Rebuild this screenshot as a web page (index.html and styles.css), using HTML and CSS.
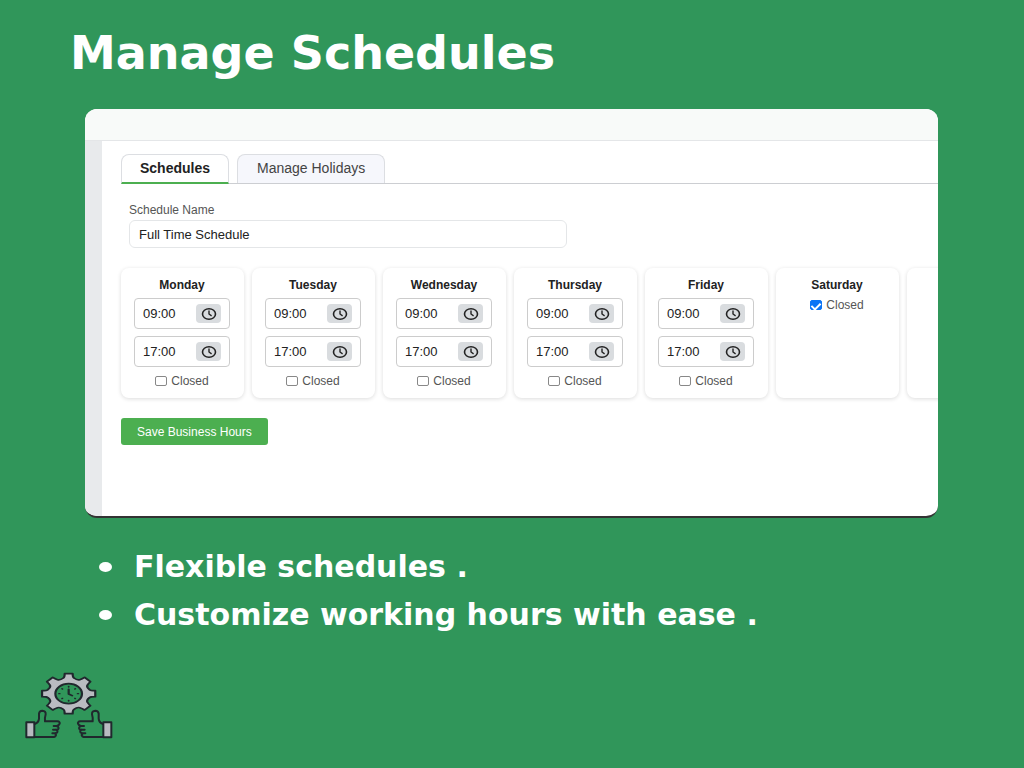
FILE: index.html
```html
<!DOCTYPE html>
<html lang="en">
<head>
    <meta charset="UTF-8">
    <meta name="viewport" content="width=device-width, initial-scale=1.0">
    <title>Manage Schedules</title>
    <link rel="stylesheet" href="styles.css">
</head>
<body>
    <!-- Shared clock icon -->
    <svg class="sprite" aria-hidden="true">
        <symbol id="clock" viewBox="0 0 16 14">
            <ellipse cx="8" cy="7" rx="6.5" ry="5.3" fill="none" stroke="#222" stroke-width="1.6"/>
            <path d="M8 3.5V7l2.6 1.8" fill="none" stroke="#222" stroke-width="1.4"/>
        </symbol>
    </svg>

    <h1 class="page-title">Manage Schedules</h1>

    <main class="window">
        <div class="window-bar"></div>
        <div class="window-body">
            <div class="side-strip"></div>
            <form class="content">
                <div class="tabs">
                    <button type="button" class="tab active">Schedules</button>
                    <button type="button" class="tab">Manage Holidays</button>
                </div>

                <div class="name-field">
                    <label for="schedule-name">Schedule Name</label>
                    <input type="text" id="schedule-name" value="Full Time Schedule">
                </div>

                <div class="days">
                    <section class="day">
                        <h2>Monday</h2>
                        <div class="time"><input type="text" value="09:00" aria-label="Monday opens"><button type="button" aria-label="Pick time"><svg><use href="#clock"/></svg></button></div>
                        <div class="time"><input type="text" value="17:00" aria-label="Monday closes"><button type="button" aria-label="Pick time"><svg><use href="#clock"/></svg></button></div>
                        <label class="closed"><input type="checkbox">Closed</label>
                    </section>
                    <section class="day">
                        <h2>Tuesday</h2>
                        <div class="time"><input type="text" value="09:00" aria-label="Tuesday opens"><button type="button" aria-label="Pick time"><svg><use href="#clock"/></svg></button></div>
                        <div class="time"><input type="text" value="17:00" aria-label="Tuesday closes"><button type="button" aria-label="Pick time"><svg><use href="#clock"/></svg></button></div>
                        <label class="closed"><input type="checkbox">Closed</label>
                    </section>
                    <section class="day">
                        <h2>Wednesday</h2>
                        <div class="time"><input type="text" value="09:00" aria-label="Wednesday opens"><button type="button" aria-label="Pick time"><svg><use href="#clock"/></svg></button></div>
                        <div class="time"><input type="text" value="17:00" aria-label="Wednesday closes"><button type="button" aria-label="Pick time"><svg><use href="#clock"/></svg></button></div>
                        <label class="closed"><input type="checkbox">Closed</label>
                    </section>
                    <section class="day">
                        <h2>Thursday</h2>
                        <div class="time"><input type="text" value="09:00" aria-label="Thursday opens"><button type="button" aria-label="Pick time"><svg><use href="#clock"/></svg></button></div>
                        <div class="time"><input type="text" value="17:00" aria-label="Thursday closes"><button type="button" aria-label="Pick time"><svg><use href="#clock"/></svg></button></div>
                        <label class="closed"><input type="checkbox">Closed</label>
                    </section>
                    <section class="day">
                        <h2>Friday</h2>
                        <div class="time"><input type="text" value="09:00" aria-label="Friday opens"><button type="button" aria-label="Pick time"><svg><use href="#clock"/></svg></button></div>
                        <div class="time"><input type="text" value="17:00" aria-label="Friday closes"><button type="button" aria-label="Pick time"><svg><use href="#clock"/></svg></button></div>
                        <label class="closed"><input type="checkbox">Closed</label>
                    </section>
                    <section class="day">
                        <h2>Saturday</h2>
                        <label class="closed"><input type="checkbox" checked>Closed</label>
                    </section>
                    <section class="day"></section>
                </div>

                <button type="submit" class="save">Save Business Hours</button>
            </form>
        </div>
    </main>

    <ul class="features">
        <li>Flexible schedules .</li>
        <li>Customize working hours with ease .</li>
    </ul>

    <!-- Gear with clock, held up by two thumbs -->
    <svg class="logo" viewBox="45 36 264 201" fill="none" stroke="#20282d" stroke-width="6" stroke-linejoin="round" stroke-linecap="round" aria-hidden="true">
        <g transform="translate(176 101) scale(1.33 1)">
            <path fill="#b9bbc1" stroke-width="5" d="M-12-47Q-9-49-9-60H9Q9-49 12-47Q19-40 25-42Q30-44 36-49L49-36Q44-30 42-25Q40-19 47-12Q49-9 60-9V9Q49 9 47 12Q40 19 42 25Q44 30 49 36L36 49Q30 44 25 42Q19 40 12 47Q9 49 9 60H-9Q-9 49-12 47Q-19 40-25 42Q-30 44-36 49L-49 36Q-44 30-42 25Q-40 19-47 12Q-49 9-60 9V-9Q-49-9-47-12Q-40-19-42-25Q-44-30-49-36L-36-49Q-30-44-25-42Q-19-40-12-47Z"/>
            <circle r="30" fill="#30965a" stroke-width="5"/>
            <path stroke-width="5" d="M0-13V1L8 6"/>
            <path stroke-width="4" d="M0-22v2M0 20v2M-22 0h2M20 0h2M-15-15l1 1M15-15l-1 1M-15 15l1-1M15 15l-1-1"/>
        </g>
        <g id="thumb">
            <rect x="49" y="187" width="24" height="45" fill="#b9bbc1"/>
            <path d="M74 192Q86 188 87 176V161Q88 152 97 152Q108 153 107 163Q104 173 105 184H142Q151 185 149 191Q147 197 140 198H131M140 198Q149 202 144 208Q141 210 129 209M138 209Q145 213 141 218Q137 220 127 220M134 220Q141 224 136 229Q133 231 126 231H74"/>
        </g>
        <use href="#thumb" transform="translate(353 0) scale(-1 1)"/>
    </svg>
</body>
</html>
```
FILE: styles.css
```css
* {
    box-sizing: border-box;
}
body {
    margin: 0;
    padding: 28px 0 0;
    background-color: #30965a;
    font-family: "Liberation Sans", Arial, sans-serif;
    color: #222;
}
button, input {
    font-family: inherit;
    color: inherit;
}
.sprite {
    display: none;
}
.page-title {
    margin: 0 70px 31px;
    font: bold 46px/50px "DejaVu Sans", Verdana, sans-serif;
    color: white;
}

/* App window */
.window {
    margin: 0 86px 0 85px;
    background-color: white;
    border-radius: 12px;
    border-bottom: 2px solid #333;
    overflow: hidden;
}
.window-bar {
    height: 32px;
    background-color: #f8faf9;
    border-bottom: 1px solid #e4e6e8;
}
.window-body {
    display: flex;
}
.side-strip {
    flex: 0 0 17px;
    background-color: #e8eaec;
}
.content {
    flex: 1;
    min-width: 0;
    padding: 13px 0 71px 19px;
}

/* Tabs */
.tabs {
    display: flex;
    gap: 8px;
    border-bottom: 1px solid #ccced2;
}
.tab {
    height: 29px;
    padding: 0 19px 2px;
    border: 1px solid #dcdee2;
    border-bottom: 0;
    border-radius: 8px 8px 0 0;
    background-color: #f6f7fc;
    font-size: 14px;
    color: #444;
}
.tab.active {
    margin-bottom: -1px;
    height: 30px;
    padding: 0 18px 1px;
    border-bottom: 2px solid #4caf50;
    background-color: white;
    font-weight: bold;
    color: #222;
}

/* Schedule name */
.name-field {
    max-width: 438px;
    margin: 19px 8px 20px;
}
.name-field label {
    display: block;
    padding-bottom: 2px;
    font-size: 12px;
    line-height: 15px;
    color: #555;
}
.name-field input {
    display: block;
    width: 100%;
    height: 28px;
    padding: 0 9px;
    border: 1px solid #e4e6e8;
    border-radius: 6px;
    font-size: 13px;
}

/* Day cards */
.days {
    display: flex;
    gap: 8px;
}
.day {
    flex: 0 0 123px;
    min-height: 130px;
    padding: 9px 14px 8px 13px;
    border-radius: 8px;
    box-shadow: 0 1px 4px rgba(0, 0, 0, 0.14);
    text-align: center;
}
.day h2 {
    margin: 0 0 5px;
    font-size: 12px;
    line-height: 16px;
}
.time {
    display: flex;
    align-items: center;
    justify-content: space-between;
    height: 31px;
    margin-bottom: 7px;
    padding: 0 8px;
    border: 1px solid #ccc;
    border-radius: 4px;
}
.time input {
    width: 48px;
    padding: 0;
    border: 0;
    font-size: 13px;
}
.time button {
    display: flex;
    align-items: center;
    justify-content: center;
    width: 25px;
    height: 19px;
    padding: 0;
    border: 0;
    border-radius: 4px;
    background-color: #d9dcdf;
}
.time svg {
    width: 16px;
    height: 14px;
}
.closed {
    display: flex;
    align-items: center;
    justify-content: center;
    gap: 4px;
    font-size: 12px;
    line-height: 14px;
    color: #555;
}
.closed input {
    display: flex;
    justify-content: center;
    appearance: none;
    width: 12px;
    height: 10px;
    margin: 0;
    border: 1px solid #888;
    border-radius: 2px;
}
.closed input:checked {
    border-color: #0b74f5;
    background-color: #0b74f5;
}
.closed input:checked::after {
    content: '';
    width: 4px;
    height: 7px;
    border: solid white;
    border-width: 0 2px 2px 0;
    transform: rotate(45deg);
}
.save {
    display: block;
    height: 27px;
    margin-top: 20px;
    padding: 0 16px;
    border: 0;
    border-radius: 3px;
    background-color: #4caf50;
    font-size: 12px;
    color: white;
}

/* Feature list */
.features {
    margin: 25px 0 0 99px;
    padding: 0;
    list-style: none;
    font: bold 30px/48px "DejaVu Sans", Verdana, sans-serif;
    color: white;
}
.features li {
    display: flex;
    align-items: center;
    gap: 22px;
}
.features li::before {
    content: '';
    width: 13px;
    height: 10px;
    border-radius: 50%;
    background-color: white;
}
.logo {
    display: block;
    width: 88px;
    height: 67px;
    margin: 33px 0 0 25px;
}
```
